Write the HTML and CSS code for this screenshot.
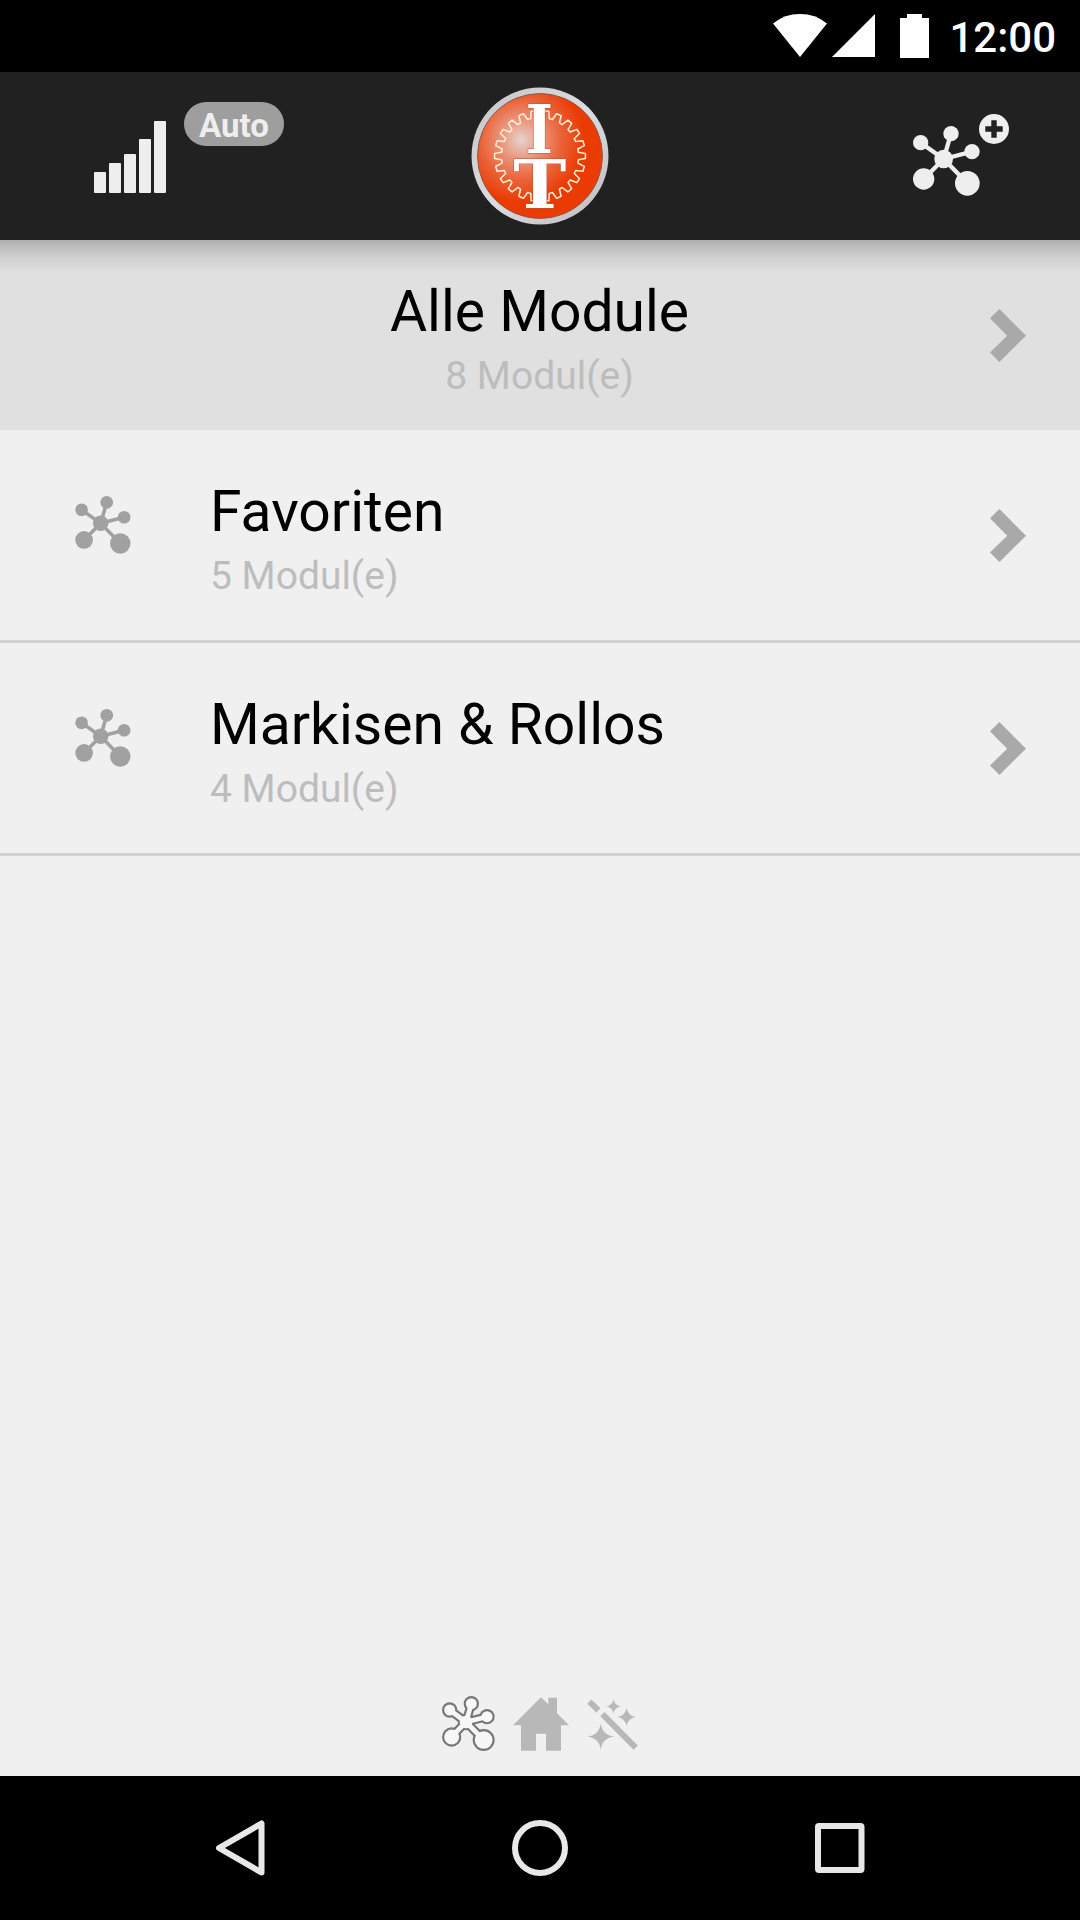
FILE: index.html
```
<!DOCTYPE html>
<html lang="de">

<head>
    <meta charset="UTF-8">
    <meta name="viewport" content="width=device-width, initial-scale=1.0">
    <title>Module</title>
    <link rel="stylesheet" href="styles.css">
</head>

<body>
    <svg class="hidden">
        <symbol id="network" viewBox="69 91 201 210">
            <g stroke="currentColor" stroke-width="13">
                <line x1="161" y1="190" x2="92" y2="141" />
                <line x1="161" y1="190" x2="183" y2="114" />
                <line x1="161" y1="190" x2="246" y2="168" />
                <line x1="161" y1="190" x2="101" y2="250" />
                <line x1="161" y1="190" x2="232" y2="263" />
            </g>
            <g fill="currentColor">
                <circle cx="161" cy="190" r="28" />
                <circle cx="92" cy="141" r="23" />
                <circle cx="183" cy="114" r="23" />
                <circle cx="246" cy="168" r="23" />
                <circle cx="101" cy="250" r="32" />
                <circle cx="232" cy="263" r="37" />
            </g>
        </symbol>
        <symbol id="chevron" viewBox="90 89 107 157">
            <path fill="currentColor" d="M118 89L197 168L118 246L90 218L141 168L90 116Z" />
        </symbol>
    </svg>

    <div class="statusbar">
        <svg class="wifi" viewBox="98 43 160 127"><path d="M98 71Q132 43 178 43T258 71L178 170Z" /></svg>
        <svg class="signal" viewBox="0 0 42 42"><path d="M0 42L42 0V42Z" /></svg>
        <svg class="battery" viewBox="0 0 29 44"><path d="M0 4H7V0H22V4H29V44H0Z" /></svg>
        <span class="clock">12:00</span>
    </div>

    <header>
        <div class="side">
            <svg class="bars" viewBox="0 0 72 72">
                <rect x="0" y="51" width="12" height="21" rx="1" />
                <rect x="15" y="42" width="12" height="30" rx="1" />
                <rect x="30" y="33" width="12" height="39" rx="1" />
                <rect x="45" y="18" width="12" height="54" rx="1" />
                <rect x="60" y="0" width="12" height="72" rx="1" />
            </svg>
            <span class="auto">Auto</span>
        </div>
        <svg class="logo" viewBox="-69 -69 138 138">
            <defs>
                <radialGradient id="red" cx="0.35" cy="0.37" r="0.5">
                    <stop offset="0" stop-color="#e6d3ce" />
                    <stop offset="0.3" stop-color="#ea9a80" />
                    <stop offset="0.65" stop-color="#ea6238" />
                    <stop offset="1" stop-color="#ea3b05" />
                </radialGradient>
                <linearGradient id="ring" x1="0" y1="0" x2="1" y2="1">
                    <stop offset="0" stop-color="#c4c4c6" />
                    <stop offset="0.5" stop-color="#dcdcdf" />
                    <stop offset="1" stop-color="#bcbcbe" />
                </linearGradient>
            </defs>
            <circle r="68.5" fill="url(#ring)" />
            <circle r="62.5" fill="url(#red)" stroke="#8f5a48" stroke-width="1" />
            <path id="gear" class="gear" />
            <g class="letters">
                <text transform="translate(-0.7 -3) scale(0.86 0.99)">I</text>
                <text transform="translate(-0.2 52) scale(1.04 0.99)">T</text>
            </g>
        </svg>
        <div class="side right">
            <svg class="add-network"><use href="#network" /></svg>
            <svg class="plus" viewBox="0 0 30 30">
                <circle cx="15" cy="15" r="15" />
                <path d="M15 6.3V23.7M6.3 15H23.7" />
            </svg>
        </div>
    </header>

    <main>
        <div class="row all">
            <div class="text">
                <div class="title">Alle Module</div>
                <div class="count">8 Modul(e)</div>
            </div>
            <svg class="chevron"><use href="#chevron" /></svg>
        </div>
        <div class="row">
            <svg class="group-icon"><use href="#network" /></svg>
            <div class="text">
                <div class="title">Favoriten</div>
                <div class="count">5 Modul(e)</div>
            </div>
            <svg class="chevron"><use href="#chevron" /></svg>
        </div>
        <div class="row">
            <svg class="group-icon"><use href="#network" /></svg>
            <div class="text">
                <div class="title">Markisen &amp; Rollos</div>
                <div class="count">4 Modul(e)</div>
            </div>
            <svg class="chevron"><use href="#chevron" /></svg>
        </div>
    </main>

    <div class="tabs">
        <svg class="tab-network" viewBox="65 49 159 165">
            <g class="outline">
                <path stroke-width="27" d="M137 127L88 91M137 127L153 73M137 127L200 111M137 127L94 171M137 127L190 181" />
                <circle cx="137" cy="127" r="25" />
                <circle cx="88" cy="91" r="23" />
                <circle cx="153" cy="72" r="23" />
                <circle cx="200" cy="111" r="23" />
                <circle cx="94" cy="172" r="29" />
                <circle cx="190" cy="181" r="33" />
            </g>
            <g class="inner">
                <path stroke-width="14" d="M137 127L88 91M137 127L153 73M137 127L200 111M137 127L94 171M137 127L190 181" />
                <circle cx="137" cy="127" r="19" />
                <circle cx="88" cy="91" r="16.5" />
                <circle cx="153" cy="72" r="16.5" />
                <circle cx="200" cy="111" r="16.5" />
                <circle cx="94" cy="172" r="22.5" />
                <circle cx="190" cy="181" r="26.5" />
            </g>
        </svg>
        <svg class="tab-home" viewBox="276 52 168 161">
            <path d="M276 136L360 52L382 73V54H408V100L444 136H420V213H375V162H345V213H300V136Z" />
        </svg>
        <svg class="tab-wand" viewBox="500 58 152 152">
            <path class="stick" d="M507 66L534 92M546 103L645 203" />
            <path d="M541 130Q545 165 581 170Q545 175 541 210Q537 175 501 170Q537 165 541 130Z" />
            <path d="M618 85Q622 108 645 112Q622 116 618 139Q614 116 591 112Q614 108 618 85Z" />
            <path d="M579 59Q582 77 600 80Q582 83 579 101Q576 83 558 80Q576 77 579 59Z" />
        </svg>
    </div>

    <nav>
        <svg class="back" viewBox="0 0 56 56"><path d="M45.5 3.5V52.5L3 28Z" /></svg>
        <svg viewBox="0 0 56 56"><circle cx="28" cy="28" r="25" /></svg>
        <svg viewBox="0 0 56 56"><rect x="6" y="6" width="43.5" height="44" rx="1" /></svg>
    </nav>

    <script>
        // gear outline behind the letters
        const teeth = 22;
        const step = Math.PI * 2 / teeth;
        let d = '';

        function point(cmd, r, a) {
            d += cmd + (r * Math.sin(a)).toFixed(2) + ' ' + (-r * Math.cos(a)).toFixed(2);
        }

        for (let i = 0; i < teeth; i++) {
            const a = (i + 0.5) * step;
            point(i ? 'L' : 'M', 38.5, a - step * 0.35);
            point('L', 45.5, a - step * 0.19);
            point('L', 45.5, a + step * 0.19);
            point('L', 38.5, a + step * 0.35);
        }
        document.getElementById('gear').setAttribute('d', d + 'Z');
    </script>
</body>

</html>
```
FILE: styles.css
```
* {
    box-sizing: border-box;
}

body {
    font-family: Roboto, sans-serif;
    background-color: #f0f0f0;
    display: flex;
    flex-direction: column;
    height: 1920px;
    width: 1080px;
    margin: 0;
    overflow: hidden;
}

svg {
    display: block;
    flex-shrink: 0;
}

.hidden {
    display: none;
}

.statusbar {
    background-color: #000000;
    height: 72px;
    display: flex;
    justify-content: flex-end;
    padding: 14px 24px 0 0;
    fill: #ffffff;
}

.wifi {
    width: 54px;
    height: 43px;
    margin-right: 5px;
}

.signal {
    width: 43px;
    height: 43px;
    margin-right: 25px;
}

.battery {
    width: 29px;
    height: 44px;
    margin-right: 20px;
}

.clock {
    color: #ffffff;
    font-size: 42px;
    font-weight: 500;
    line-height: 48px;
}

header {
    background-color: #212121;
    height: 168px;
    display: flex;
    justify-content: space-between;
    padding: 0 71px 0 94px;
}

.side {
    display: flex;
    width: 377px;
}

.bars {
    width: 72px;
    height: 72px;
    margin: 49px 18px 0 0;
    fill: #eeeeee;
}

.auto {
    width: 100px;
    height: 44px;
    margin-top: 30px;
    border-radius: 22px;
    background-color: #9e9e9e;
    color: #eeeeee;
    font-size: 33px;
    font-weight: bold;
    line-height: 48px;
    text-align: center;
}

.logo {
    width: 138px;
    height: 138px;
    margin-top: 15px;
}

.gear {
    fill: none;
    stroke: #fff0d8;
    stroke-width: 1.5;
    stroke-linejoin: round;
}

.letters {
    fill: #ffffff;
    stroke: #b5563a;
    stroke-width: 1;
    paint-order: stroke;
    font-family: "DejaVu Serif", serif;
    font-weight: bold;
    font-size: 68.5px;
    text-anchor: middle;
}

.right {
    justify-content: flex-end;
    width: 400px;
}

.add-network {
    width: 67px;
    height: 70px;
    margin-top: 54px;
    margin-right: -1px;
    color: #eeeeee;
}

.plus {
    width: 30px;
    height: 30px;
    margin-top: 42px;
    fill: #eeeeee;
    stroke: #212121;
}

.plus circle {
    stroke: none;
}

.plus path {
    stroke-width: 5.4;
}

main {
    flex: 1;
}

.row {
    display: flex;
    height: 213px;
    padding: 47px 54px 0 75px;
    border-bottom: 3px solid #d2d2d2;
}

.row.all {
    height: 190px;
    padding: 37px 54px 0 89px;
    border-bottom: none;
    background: linear-gradient(rgba(0, 0, 0, 0.22), rgba(0, 0, 0, 0.1) 13px, transparent 32px) #e0e0e0;
    text-align: center;
}

.text {
    flex: 1;
    padding-top: 1px;
}

.title {
    color: #000000;
    font-size: 57px;
    line-height: 68px;
}

.count {
    color: #bdbdbd;
    font-size: 39px;
    line-height: 46px;
    margin-top: 7px;
}

.group-icon {
    width: 56px;
    height: 58px;
    margin: 19px 79px 0 0;
    color: #a1a1a1;
}

.chevron {
    width: 36px;
    height: 53px;
    margin-top: 32px;
    color: #a9a9a9;
}

.tabs {
    display: flex;
    justify-content: center;
    align-items: flex-end;
    gap: 18px;
    padding: 0 1px 25px 0;
    fill: #b8b8b8;
}

.tab-network {
    width: 53px;
    height: 55px;
}

.outline {
    fill: #777777;
    stroke: #777777;
}

.inner {
    fill: #f7f7f7;
    stroke: #f7f7f7;
}

.outline circle,
.inner circle {
    stroke: none;
}

.tab-home {
    width: 56px;
    height: 54px;
}

.tab-wand {
    width: 51px;
    height: 51px;
    margin-bottom: 1px;
}

.stick {
    stroke: #b8b8b8;
    stroke-width: 18;
}

nav {
    background-color: #000000;
    height: 144px;
    display: flex;
    justify-content: space-between;
    padding: 44px 212px 0;
}

nav svg {
    width: 56px;
    height: 56px;
    fill: none;
    stroke: #e8e8e8;
    stroke-width: 6;
    stroke-linejoin: round;
}

nav .back {
    margin: 0 -4px 0 4px;
}
```
